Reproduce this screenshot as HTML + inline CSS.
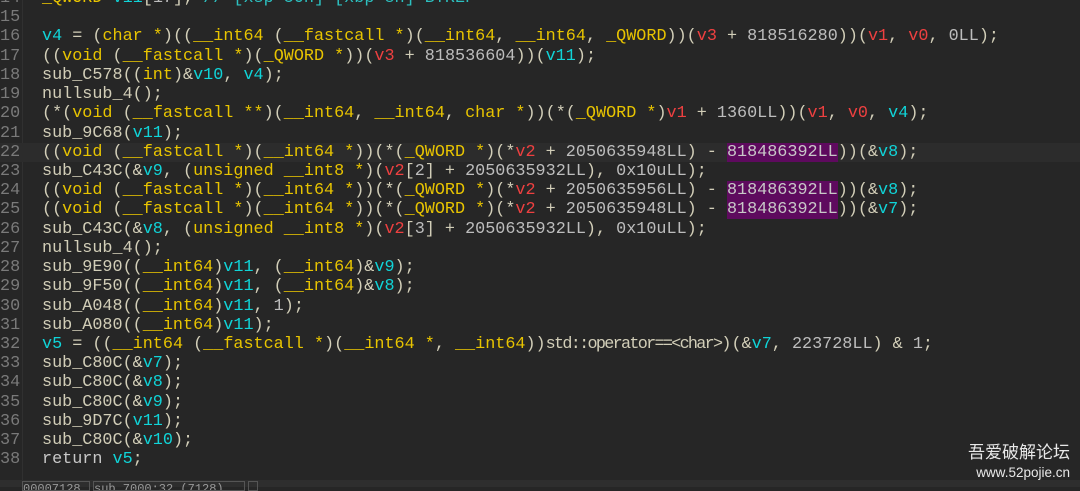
<!DOCTYPE html>
<html><head><meta charset="utf-8"><style>
html,body{margin:0;padding:0;background:#262626;width:1080px;height:487px;overflow:hidden}
.code{position:absolute;left:0;top:-11px;font-family:"Liberation Mono",monospace;font-size:16.8px;line-height:19.23px;color:#d2ceb8}
.ln{position:absolute;left:0;width:18px;text-align:right;color:#7a7a7a;font-size:16.8px;font-family:"Liberation Mono",monospace}
.row{position:relative;height:19.23px;width:1080px}
.tx{position:absolute;left:42px;white-space:pre}
.t{color:#e8c400}.r{color:#ee4040}.c{color:#10d4d8}.n{color:#bdbdbd}.cm{color:#2cc0c0}
.h{background:#5e0a5e;color:#c8c8c8}
.hl{background:#2c2c2c}
.gut{position:absolute;left:22px;top:0;width:1px;height:480px;background:#303030}
.op{letter-spacing:-1.7px}
.status{position:absolute;left:0;top:480px;width:1080px;height:7px;background:#2e2e2e}
.sb{position:absolute;top:481px;height:8px;border:1px solid #555;font-family:"Liberation Mono",monospace;font-size:12px;color:#999;line-height:14px;overflow:hidden}
.wm{position:absolute;right:10px;top:442px;color:#e8e8e8;font-family:"Liberation Sans","Noto Sans CJK SC",sans-serif;text-align:right}
</style></head><body>
<div class="gut"></div>
<div class="code"><div class="row"><span class="ln">14</span><span class="tx"><span class="t">_QWORD</span> <span class="c">v11</span>[<span class="n">17</span>]; <span class="cm">// [xsp-50h] [xbp-8h] BYREF</span></span></div><div class="row"><span class="ln">15</span></div><div class="row"><span class="ln">16</span><span class="tx"><span class="c">v4</span> = (<span class="t">char *</span>)((<span class="t">__int64</span> (<span class="t">__fastcall *</span>)(<span class="t">__int64</span>, <span class="t">__int64</span>, <span class="t">_QWORD</span>))(<span class="r">v3</span> + <span class="n">818516280</span>))(<span class="r">v1</span>, <span class="r">v0</span>, <span class="n">0LL</span>);</span></div><div class="row"><span class="ln">17</span><span class="tx">((<span class="t">void</span> (<span class="t">__fastcall *</span>)(<span class="t">_QWORD *</span>))(<span class="r">v3</span> + <span class="n">818536604</span>))(<span class="c">v11</span>);</span></div><div class="row"><span class="ln">18</span><span class="tx">sub_C578((<span class="t">int</span>)&amp;<span class="c">v10</span>, <span class="c">v4</span>);</span></div><div class="row"><span class="ln">19</span><span class="tx">nullsub_4();</span></div><div class="row"><span class="ln">20</span><span class="tx">(*(<span class="t">void</span> (<span class="t">__fastcall **</span>)(<span class="t">__int64</span>, <span class="t">__int64</span>, <span class="t">char *</span>))(*(<span class="t">_QWORD *</span>)<span class="r">v1</span> + <span class="n">1360LL</span>))(<span class="r">v1</span>, <span class="r">v0</span>, <span class="c">v4</span>);</span></div><div class="row"><span class="ln">21</span><span class="tx">sub_9C68(<span class="c">v11</span>);</span></div><div class="row hl"><span class="ln">22</span><span class="tx">((<span class="t">void</span> (<span class="t">__fastcall *</span>)(<span class="t">__int64 *</span>))(*(<span class="t">_QWORD *</span>)(*<span class="r">v2</span> + <span class="n">2050635948LL</span>) - <span class="h">818486392LL</span>))(&amp;<span class="c">v8</span>);</span></div><div class="row"><span class="ln">23</span><span class="tx">sub_C43C(&amp;<span class="c">v9</span>, (<span class="t">unsigned __int8 *</span>)(<span class="r">v2</span>[<span class="n">2</span>] + <span class="n">2050635932LL</span>), <span class="n">0x10uLL</span>);</span></div><div class="row"><span class="ln">24</span><span class="tx">((<span class="t">void</span> (<span class="t">__fastcall *</span>)(<span class="t">__int64 *</span>))(*(<span class="t">_QWORD *</span>)(*<span class="r">v2</span> + <span class="n">2050635956LL</span>) - <span class="h">818486392LL</span>))(&amp;<span class="c">v8</span>);</span></div><div class="row"><span class="ln">25</span><span class="tx">((<span class="t">void</span> (<span class="t">__fastcall *</span>)(<span class="t">__int64 *</span>))(*(<span class="t">_QWORD *</span>)(*<span class="r">v2</span> + <span class="n">2050635948LL</span>) - <span class="h">818486392LL</span>))(&amp;<span class="c">v7</span>);</span></div><div class="row"><span class="ln">26</span><span class="tx">sub_C43C(&amp;<span class="c">v8</span>, (<span class="t">unsigned __int8 *</span>)(<span class="r">v2</span>[<span class="n">3</span>] + <span class="n">2050635932LL</span>), <span class="n">0x10uLL</span>);</span></div><div class="row"><span class="ln">27</span><span class="tx">nullsub_4();</span></div><div class="row"><span class="ln">28</span><span class="tx">sub_9E90((<span class="t">__int64</span>)<span class="c">v11</span>, (<span class="t">__int64</span>)&amp;<span class="c">v9</span>);</span></div><div class="row"><span class="ln">29</span><span class="tx">sub_9F50((<span class="t">__int64</span>)<span class="c">v11</span>, (<span class="t">__int64</span>)&amp;<span class="c">v8</span>);</span></div><div class="row"><span class="ln">30</span><span class="tx">sub_A048((<span class="t">__int64</span>)<span class="c">v11</span>, <span class="n">1</span>);</span></div><div class="row"><span class="ln">31</span><span class="tx">sub_A080((<span class="t">__int64</span>)<span class="c">v11</span>);</span></div><div class="row"><span class="ln">32</span><span class="tx"><span class="c">v5</span> = ((<span class="t">__int64</span> (<span class="t">__fastcall *</span>)(<span class="t">__int64 *</span>, <span class="t">__int64</span>))<span class="op">std::operator==&lt;char&gt;</span>)(&amp;<span class="c">v7</span>, <span class="n">223728LL</span>) &amp; <span class="n">1</span>;</span></div><div class="row"><span class="ln">33</span><span class="tx">sub_C80C(&amp;<span class="c">v7</span>);</span></div><div class="row"><span class="ln">34</span><span class="tx">sub_C80C(&amp;<span class="c">v8</span>);</span></div><div class="row"><span class="ln">35</span><span class="tx">sub_C80C(&amp;<span class="c">v9</span>);</span></div><div class="row"><span class="ln">36</span><span class="tx">sub_9D7C(<span class="c">v11</span>);</span></div><div class="row"><span class="ln">37</span><span class="tx">sub_C80C(&amp;<span class="c">v10</span>);</span></div><div class="row"><span class="ln">38</span><span class="tx"><span style="color:#c8c8c8">return</span> <span class="c">v5</span>;</span></div></div>
<div class="status"></div>
<div class="sb" style="left:22px;width:66px">00007128</div>
<div class="sb" style="left:93px;width:150px">sub_7000:32 (7128)</div>
<div class="sb" style="left:248px;width:8px"></div>
<div class="wm"><div style="font-size:17px;line-height:22px">吾爱破解论坛</div><div style="font-size:13.5px;line-height:18px">www.52pojie.cn</div></div>
</body></html>
